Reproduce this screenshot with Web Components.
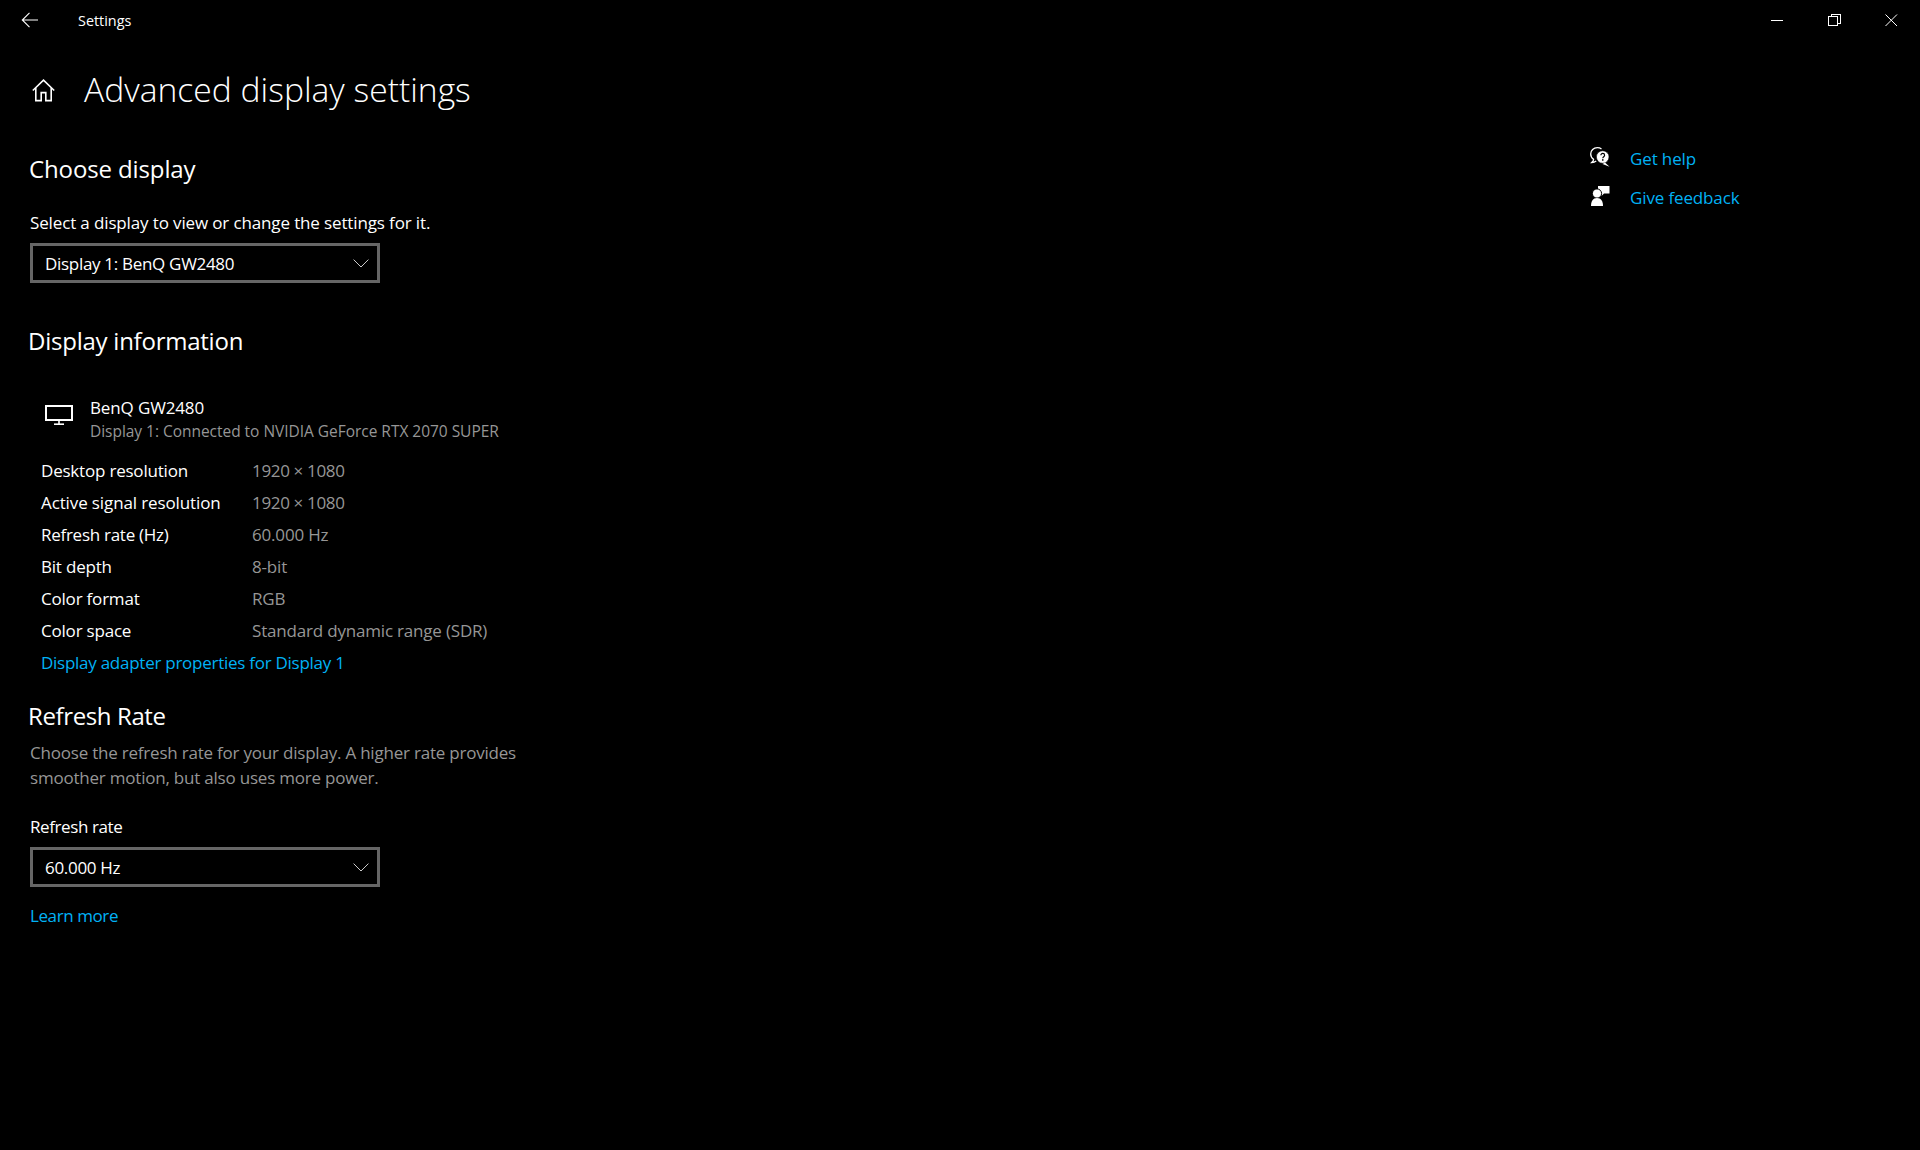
<!DOCTYPE html>
<html lang="en"><head><meta charset="utf-8"><title>Settings</title>
<style>
html,body{margin:0;height:100%;background:#000}
body{font-family:"Open Sans","Noto Sans",sans-serif;color:#fff;overflow:hidden}
</style></head><body>
<settings-app>
  <title-bar slot="top">Settings</title-bar>
  <page-heading slot="head">Advanced display settings</page-heading>
  <div slot="main">
    <section-title top="33" indent="29">Choose display</section-title>
    <field-label top="24">Select a display to view or change the settings for it.</field-label>
    <combo-box>Display 1: BenQ GW2480</combo-box>
    <section-title top="42" ls="-.01em">Display information</section-title>
    <monitor-info name="BenQ GW2480" detail="Display 1: Connected to NVIDIA GeForce RTX 2070 SUPER"></monitor-info>
    <info-row label="Desktop resolution" style="--vs:-.02em">1920 × 1080</info-row>
    <info-row label="Active signal resolution" style="--vs:-.02em;--ks:-.007em">1920 × 1080</info-row>
    <info-row label="Refresh rate (Hz)" style="--ks:-.016em">60.000 Hz</info-row>
    <info-row label="Bit depth">8-bit</info-row>
    <info-row label="Color format">RGB</info-row>
    <info-row label="Color space">Standard dynamic range (SDR)</info-row>
    <text-link indent="41" style="--ls:-.0155em">Display adapter properties for Display 1</text-link>
    <section-title top="21" ls="-.016em">Refresh Rate</section-title>
    <help-text>Choose the refresh rate for your display. A higher rate provides<br>smoother motion, but also uses more power.</help-text>
    <field-label top="23" style="--ls:-.024em">Refresh rate</field-label>
    <combo-box>60.000 Hz</combo-box>
    <text-link indent="30" top="13" style="--ls:-.024em">Learn more</text-link>
  </div>
  <side-links slot="side"></side-links>
</settings-app>
<script>
function def(name,css,html,init){
  customElements.define(name,class extends HTMLElement{
    constructor(){super();const r=this.attachShadow({mode:'open'});
      r.innerHTML='<style>'+css+'</style>'+(typeof html==='function'?html(this):html);}
    connectedCallback(){if(init)init(this)}
  });
}
def('settings-app',`
 :host{display:grid;grid-template-columns:1590px 1fr;grid-template-rows:40px 80px 1fr;width:1920px;height:1150px;background:#000}
 .top{grid-column:1/3;grid-row:1}
 .head{grid-column:1;grid-row:2}
 .main{grid-column:1;grid-row:3}
 .side{grid-column:2;grid-row:2/4;padding-top:99px}
`,`<div class="top"><slot name="top"></slot></div>
<div class="head"><slot name="head"></slot></div>
<div class="main"><slot name="main"></slot></div>
<div class="side"><slot name="side"></slot></div>`);

def('title-bar',`
 :host{display:flex;align-items:center;height:40px;font-size:14.4px;color:#fff}
 svg{display:block}
 .back{width:78px;padding-left:21px;box-sizing:border-box}
 .t{flex:1}
 .ctl{display:flex}
 .ctl div{width:57px;height:40px;display:flex;align-items:center;justify-content:center}
`,`<div class="back"><svg width="18" height="16" viewBox="0 0 18 16" fill="none" stroke="#fff" stroke-width="1.1"><path d="M8.500 .8 1.300 8l7.200 7.200M1.300 8H17"/></svg></div>
<div class="t"><slot></slot></div>
<div class="ctl">
<div><svg width="13" height="13" viewBox="0 0 13 13" shape-rendering="crispEdges"><rect x="0" y="6" width="12" height="1" fill="#fff"/></svg></div>
<div><svg width="13" height="13" viewBox="0 0 13 13" fill="none" stroke="#fff" shape-rendering="crispEdges"><rect x=".5" y="2.500" width="9" height="9"/><path d="M3 2.500V.5h9v9h-2"/></svg></div>
<div><svg width="13" height="13" viewBox="0 0 13 13" fill="none" stroke="#fff" stroke-width="1"><path d="M.5.5l11.500 11.500M12 .5.5 12"/></svg></div>
</div>`);

def('page-heading',`
 :host{display:flex;align-items:center;height:60px;margin-top:19px}
 svg{display:block;margin:2px 29px 0 32px}
 h1{margin:0;font-size:33.650px;font-weight:300;line-height:60px}
`,`<svg width="23" height="23" viewBox="0 0 23 23" fill="none" stroke="#fff" stroke-width="1.6"><path d="M.8 11.500 11.500 1.100 22.200 11.500M3.800 9V21.600h5.400v-8h4.600v8h5.400V9"/></svg><h1><slot></slot></h1>`);

def('section-title',`
 :host{display:block;height:32px;line-height:32px;font-size:24px;letter-spacing:-.005em}
`,'<slot></slot>',e=>{const s=e.style;s.marginTop=(e.getAttribute('top')||0)+'px';s.paddingLeft=(e.getAttribute('indent')||28)+'px';if(e.getAttribute('ls'))s.letterSpacing=e.getAttribute('ls')});

def('field-label',`
 :host{display:block;height:28px;line-height:28px;font-size:17px;padding-left:30px;color:#fff;letter-spacing:var(--ls,-.008em)}
`,'<slot></slot>',e=>{e.style.marginTop=(e.getAttribute('top')||0)+'px'});

def('combo-box',`
 :host{display:flex;align-items:center;justify-content:space-between;box-sizing:border-box;width:350px;height:40px;margin:6px 0 0 30px;border:3px solid #666;padding:0 8px 0 12px;font-size:17px;letter-spacing:-.018em}
 svg{display:block}
`,`<span><slot></slot></span><svg width="16" height="9" viewBox="0 0 16 9" fill="none" stroke="#ccc" stroke-width="1"><path d="M.6.6 8 8 15.400.6"/></svg>`);

def('monitor-info',`
 :host{display:flex;height:59px;margin-top:39px;padding-left:45px}
 svg{display:block;margin-top:9px;margin-right:17px;flex:none}
 .n{font-size:17px;line-height:24px;letter-spacing:-.008em}
 .d{font-size:15.500px;line-height:22px;color:#969696;letter-spacing:-.002em}
`,e=>`<svg width="28" height="20" viewBox="0 0 28 20" fill="none" stroke="#fff" stroke-width="2"><rect x="1" y="1" width="26" height="14"/><path d="M14 15v4" stroke-width="1.6"/><path d="M9 19.200h10" stroke-width="1.6"/></svg><div><div class="n">${e.getAttribute('name')}</div><div class="d">${e.getAttribute('detail')}</div></div>`);

def('info-row',`
 :host{display:grid;grid-template-columns:211px 1fr;height:32px;line-height:32px;font-size:17px;padding-left:41px;letter-spacing:var(--ks,-.012em)}
 .v{color:#969696;letter-spacing:var(--vs,-.011em)}
`,e=>`<span>${e.getAttribute('label')}</span><span class="v"><slot></slot></span>`);

def('text-link',`
 :host{display:block;height:32px;line-height:32px;color:#00b2f5;font-size:17px;letter-spacing:var(--ls,-.008em)}
`,'<slot></slot>',e=>{const s=e.style;s.paddingLeft=(e.getAttribute('indent')||0)+'px';s.marginTop=(e.getAttribute('top')||0)+'px'});

def('help-text',`
 :host{display:block;margin-top:8px;line-height:25px;font-size:17px;color:#969696;padding-left:30px;letter-spacing:-.0125em}
`,'<slot></slot>');

def('side-links',`
 :host{display:grid;grid-template-columns:40px 1fr;grid-auto-rows:39px;align-items:center;font-size:17px;color:#00b2f5;letter-spacing:-.008em}
 svg{display:block;margin-bottom:3px}
`,`<svg width="20" height="20" viewBox="0 0 20 20"><path d="M11.500 2C10.300 1.100 8.800.7 7.300.7 3.600.7.700 3.400.7 7c0 2.200 1.100 4.100 2.900 5.300 0 1-.6 2.200-1.900 3.300 1.900 0 3.400-.6 4.500-1.600" fill="none" stroke="#fff" stroke-width="1.300"/><circle cx="12.700" cy="10" r="6.300" fill="#fff" stroke="#000" stroke-width=".6"/><path d="M15 15.500l4.500 4.200-7-2.800z" fill="#fff"/><path d="M10.900 8.300c0-2.500 3.700-2.500 3.700 0 0 1.400-1.800 1.500-1.800 3" fill="none" stroke="#000" stroke-width="1.200"/><rect x="12" y="12.200" width="1.500" height="1.500"/></svg><span>Get help</span>
<svg width="20" height="20" viewBox="0 0 20 20" fill="#fff"><path d="M8 0h11.500v7.500H14l-2.500 2.500v-2.500H8z"/><circle cx="7" cy="7.500" r="4.600" stroke="#000" stroke-width="1"/><path d="M1 20c0-5 2-8 6-8s6 3 6 8z"/></svg><span>Give feedback</span>`);
</script>
</body></html>
